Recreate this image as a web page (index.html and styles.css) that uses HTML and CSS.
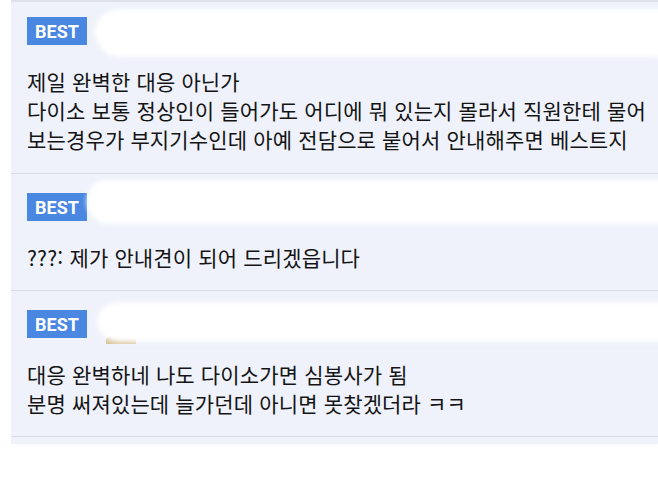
FILE: index.html
```html
<!DOCTYPE html>
<html lang="ko">
<head>
<meta charset="utf-8">
<link rel="stylesheet" href="styles.css">
</head>
<body>
<div class="panel">
  <div class="comment first">
    <div class="head">
      <span class="badge">BEST</span>
      <span class="smear smear-1"></span>
      <span class="spot spot-1"></span>
    </div>
    <p class="body">제일 완벽한 대응 아닌가<br>다이소 보통 정상인이 들어가도 어디에 뭐 있는지 몰라서 직원한테 물어<br>보는경우가 부지기수인데 아예 전담으로 붙어서 안내해주면 베스트지</p>
  </div>
  <div class="comment">
    <div class="head">
      <span class="badge">BEST</span>
      <span class="smear smear-2"></span>
    </div>
    <p class="body">???: 제가 안내견이 되어 드리겠읍니다</p>
  </div>
  <div class="comment">
    <div class="head">
      <span class="badge">BEST</span>
      <span class="spot spot-3"></span>
      <span class="smear smear-3"></span>
    </div>
    <p class="body">대응 완벽하네 나도 다이소가면 심봉사가 됨<br>분명 써져있는데 늘가던데 아니면 못찾겠더라 ㅋㅋ</p>
  </div>
</div>
</body>
</html>
```
FILE: styles.css
```css
html, body {
  margin: 0;
  padding: 0;
  background: #ffffff;
  overflow: hidden;
}
body {
  width: 658px;
  height: 487px;
}
.panel {
  margin-left: 11px;
  background: #eff2fb;
  border-top: 2px solid #dde1ea;
  padding-bottom: 7px;
  box-shadow: 0 4px 5px -3px rgba(239, 242, 251, 0.7);
}
.comment {
  padding: 19px 0 18px 16px;
  border-bottom: 1px solid #d9dce5;
}
.comment.first {
  padding-top: 15px;
  padding-bottom: 19px;
}
.head {
  position: relative;
  height: 28px;
  display: flex;
  align-items: center;
}
.badge {
  display: inline-flex;
  align-items: center;
  justify-content: center;
  width: 60px;
  height: 28px;
  background: #4a87e1;
  color: #ffffff;
  font-family: Roboto, "Liberation Sans", sans-serif;
  font-weight: 700;
  font-size: 18px;
  position: relative;
  z-index: 0;
}
.smear {
  position: absolute;
  background: #ffffff;
  filter: blur(2.5px);
  z-index: 1;
}
.smear-1 {
  left: 68px;
  top: -8px;
  width: 580px;
  height: 48px;
  border-radius: 26px 10px 18px 28px / 24px 10px 24px 28px;
}
.smear-2 {
  left: 60px;
  top: -13px;
  width: 590px;
  height: 44px;
  border-radius: 22px 8px 8px 26px / 26px 8px 8px 28px;
}
.smear-3 {
  left: 70px;
  top: -8px;
  width: 580px;
  height: 40px;
  border-radius: 22px 8px 8px 24px / 20px 8px 8px 20px;
}
.spot {
  position: absolute;
  background: #d8c7a6;
  z-index: 0;
}
.spot-1 {
  left: 101px;
  top: 30px;
  width: 6px;
  height: 4px;
  border-radius: 50% 50% 0 0;
}
.spot-3 {
  left: 79px;
  top: 26px;
  width: 30px;
  height: 8px;
  border-radius: 40% 60% 0 0;
  background: #d9c59c;
}
.body {
  margin: 22px 0 0 0;
  font-family: "Noto Sans CJK KR", "Noto Sans", sans-serif;
  font-size: 21px;
  letter-spacing: 0.15px;
  line-height: 29px;
  color: #141414;
  white-space: nowrap;
}
```
